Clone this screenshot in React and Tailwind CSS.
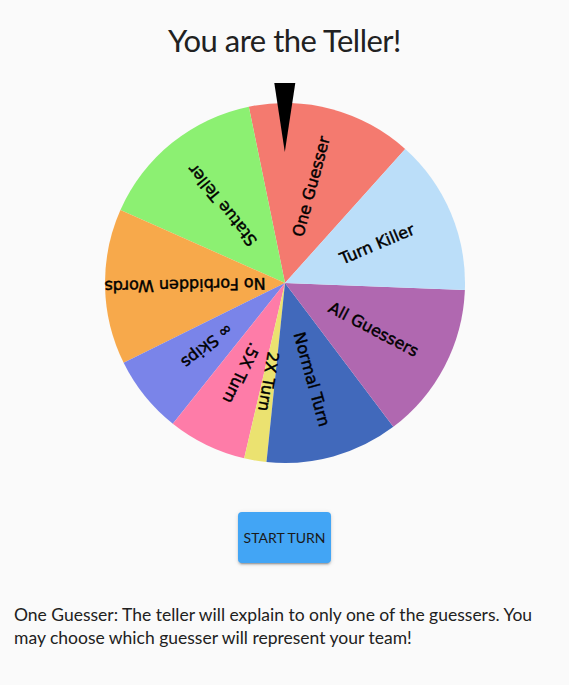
import React from 'react';

// Wheel slices, angles in degrees counter-clockwise from 3 o'clock
const SLICES = [
  { label: 'One Guesser', from: 48.1, to: 101.6, color: '#f47a6f' },
  { label: 'Statue Teller', from: 101.6, to: 156.1, color: '#8cf072' },
  { label: 'No Forbidden Words', from: 156.1, to: 206.3, color: '#f7a94b' },
  { label: '∞ Skips', from: 206.3, to: 231.45, color: '#7a84e9' },
  { label: '.5X Turn', from: 231.45, to: 256.9, color: '#fe7ca8' },
  { label: '2X Turn', from: 256.9, to: 264.1, color: '#ebe270' },
  { label: 'Normal Turn', from: 264.1, to: 307, color: '#4169bb' },
  { label: 'All Guessers', from: 307, to: 357.8, color: '#b068b0' },
  { label: 'Turn Killer', from: 357.8, to: 408.1, color: '#bbdef9' },
];

const CX = 190;
const CY = 201;
const R = 180;

const rad = (d) => (d * Math.PI) / 180;
const pt = (a, r) => [CX + r * Math.cos(rad(a)), CY - r * Math.sin(rad(a))];

function slicePath(from, to) {
  const [x1, y1] = pt(from, R);
  const [x2, y2] = pt(to, R);
  const large = to - from > 180 ? 1 : 0;
  return `M ${CX} ${CY} L ${x1} ${y1} A ${R} ${R} 0 ${large} 0 ${x2} ${y2} Z`;
}

function Wheel() {
  return (
    <svg width="380" height="385" viewBox="0 0 380 385" className="block">
      {SLICES.map((s) => (
        <path key={s.label} d={slicePath(s.from, s.to)} fill={s.color} />
      ))}
      {SLICES.map((s) => {
        const mid = (s.from + s.to) / 2;
        const [x, y] = pt(mid, 100);
        return (
          <text
            key={s.label + '-t'}
            x={x}
            y={y}
            fill="#000"
            stroke="#000"
            strokeWidth="0.45"
            fontSize="16"
            fontFamily="'DejaVu Sans', sans-serif"
            textAnchor="middle"
            dominantBaseline="central"
            transform={`rotate(${-mid} ${x} ${y})`}
          >
            {s.label}
          </text>
        );
      })}
      {/* pointer */}
      <polygon points="179.3,1 200.3,1 189.8,70" fill="#000" />
    </svg>
  );
}

export default function App() {
  return (
    <div className="min-h-screen bg-[#fafafa] flex flex-col items-center text-[#212121] font-['Lato',sans-serif]">
      <h1 className="pt-[20px] text-[31px] leading-[40px] tracking-[-0.5px] font-normal">You are the Teller!</h1>
      <div className="mt-[22px]">
        <Wheel />
      </div>
      <button className="mt-[45px] w-[93px] h-[51px] rounded bg-[#42a5f5] text-[14px] text-[#1a1a1a] shadow-[0_3px_1px_-2px_rgba(0,0,0,0.2),0_2px_2px_0_rgba(0,0,0,0.14),0_1px_5px_0_rgba(0,0,0,0.12)]">
        START TURN
      </button>
      <p className="self-stretch px-[14px] mt-[40px] text-[17.5px] leading-[23px]">
        One Guesser: The teller will explain to only one of the guessers. You may choose which guesser will represent your team!
      </p>
    </div>
  );
}
